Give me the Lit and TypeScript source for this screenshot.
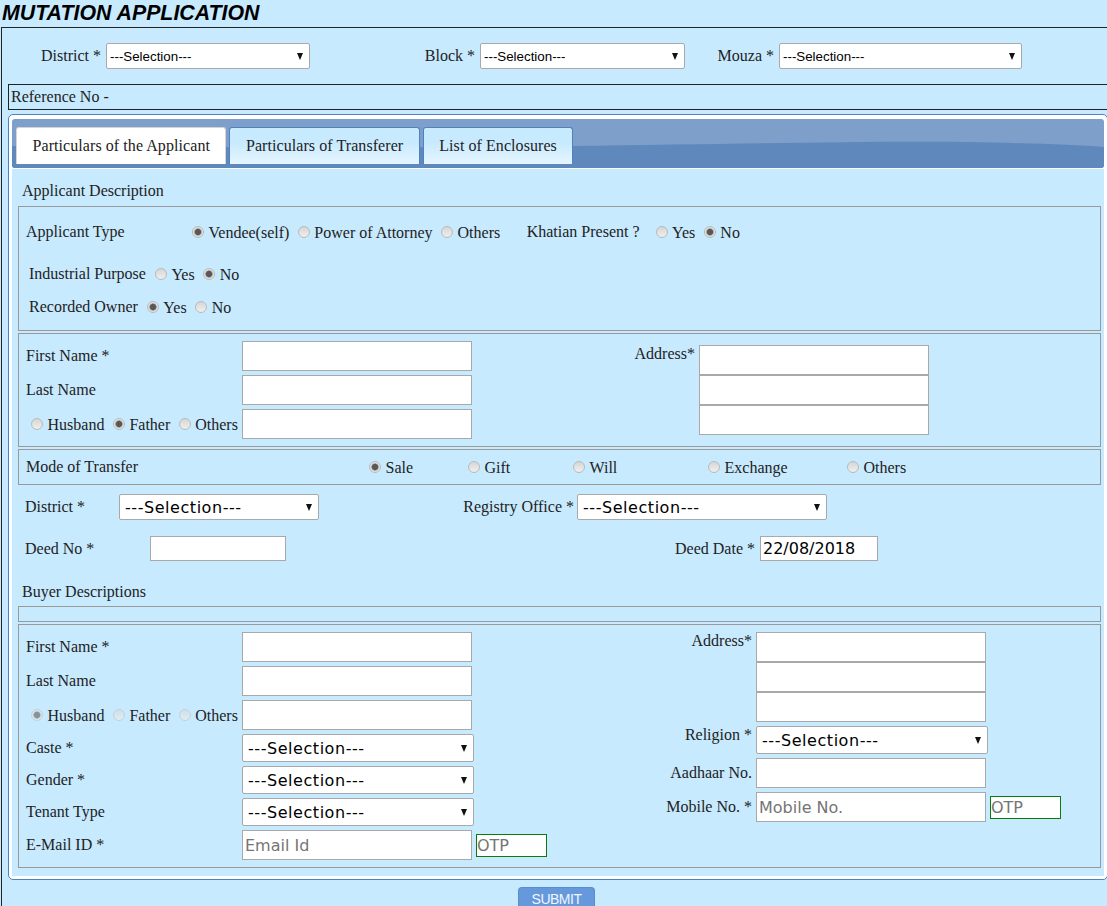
import { LitElement, html, css } from 'lit';
import { customElement } from 'lit/decorators.js';

const radio = (name: string, label: string, checked = false, disabled = false) => html`
  <label class="opt">
    <input type="radio" name=${name} ?checked=${checked} ?disabled=${disabled} />${label}
  </label>
`;

const select = (cls: string) => html`
  <select class=${cls}><option>---Selection---</option></select>
`;

@customElement('app-root')
export class AppRoot extends LitElement {
  static override styles = css`
    :host {
      display: block;
      width: 1107px;
      height: 906px;
      overflow: hidden;
      background: #c8eaff;
      color: #222;
      font-family: 'Liberation Serif', 'Times New Roman', serif;
      font-size: 16px;
      line-height: 18px;
    }

    * {
      box-sizing: border-box;
    }

    h1 {
      margin: 0;
      height: 27px;
      padding-left: 2px;
      font-family: 'Liberation Sans', Arial, sans-serif;
      font-size: 21.33px;
      font-style: italic;
      font-weight: bold;
      line-height: 27px;
      color: #000;
    }

    .outer {
      margin-left: 1px;
      width: 1200px;
      height: 879px;
      border: 1px solid #222;
      border-bottom: none;
    }

    .top-row {
      display: grid;
      grid-template-columns: 104px 204px 170px 205px 94px 243px;
      align-items: center;
      height: 56px;
    }

    .lbl-end {
      padding-right: 5px;
      text-align: right;
    }

    .ref {
      margin-left: 6px;
      height: 26px;
      padding-left: 2px;
      border: 1px solid #222;
      line-height: 24px;
    }

    .widget {
      display: flex;
      flex-direction: column;
      margin: 4px 0 0 6px;
      width: 1100px;
      height: 766px;
      padding: 4px 3px 3px;
      background: #fff;
      border: 1px solid #4f83bf;
      border-radius: 5px;
    }

    .tabbar {
      position: relative;
      display: flex;
      gap: 3px;
      flex: none;
      height: 49px;
      padding: 8px 0 0 4px;
      background: #7d9fc9;
      border-radius: 3px;
      overflow: hidden;
    }

    .wave {
      position: absolute;
      left: 0;
      top: 0;
      width: 1092px;
      height: 49px;
    }

    .tab {
      position: relative;
      height: 37px;
      padding: 0 15.5px;
      line-height: 36px;
      letter-spacing: 0.07px;
      background: linear-gradient(#c8eaff 40%, #e6f5ff);
      border: 1px solid #4f83bf;
      border-bottom: none;
      border-radius: 3px 3px 0 0;
    }

    .tab.active {
      background: #fff;
      border-color: #d5d5d5;
    }

    .panel {
      flex: 1;
      margin-top: 1px;
      padding-left: 6px;
      background: #c8eaff;
    }

    .heading {
      padding-left: 4px;
      display: flex;
      align-items: center;
    }

    .heading.first {
      height: 37px;
      padding-top: 7px;
    }

    .heading.second {
      height: 45px;
      padding-top: 16px;
    }

    .box {
      width: 1083px;
      border: 1px solid #999;
    }

    .box + .box {
      margin-top: 2px;
    }

    .type-box {
      height: 125px;
      padding-left: 7px;
    }

    .flex-row {
      display: flex;
      align-items: center;
    }

    .row-a {
      height: 50px;
    }

    .row-b {
      height: 34px;
      padding-left: 3px;
    }

    .row-c {
      height: 32px;
      padding-left: 3px;
    }

    .type-lbl {
      width: 166px;
    }

    .ind-lbl {
      margin-right: 9px;
    }

    .khatian {
      margin: 0 16px 0 18px;
    }

    .opt {
      display: inline-flex;
      align-items: center;
      margin-right: 8.5px;
      padding-top: 2px;
      white-space: nowrap;
    }

    input[type='radio'] {
      appearance: none;
      flex: none;
      width: 12px;
      height: 12px;
      margin: -3px 4.5px 0 0;
      border: 1px solid #bababa;
      border-radius: 50%;
      background: linear-gradient(#d6d6d6, #efefef);
    }

    input[type='radio']:checked {
      background: radial-gradient(circle, #585858 0 2.6px, #8a8a8a 3.3px, #e2e2e2 4px);
    }

    input[type='radio']:disabled {
      opacity: 0.6;
      border-color: #c0c0c0;
    }

    input[type='text'] {
      display: block;
      width: 230px;
      height: 30px;
      padding: 1px 2px;
      border: 1px solid #a9a9a9;
      background: #fff;
      font-family: 'DejaVu Sans', Verdana, sans-serif;
      font-size: 16px;
      color: #000;
      outline: none;
    }

    input::placeholder {
      color: #757575;
      opacity: 1;
    }

    input.otp {
      width: 71px;
      height: 23px;
      margin-left: 4px;
      padding: 0;
      border-color: #0a7a0a;
      align-self: center;
    }

    input.deed {
      height: 25px;
    }

    input.deed-no {
      width: 136px;
    }

    input.deed-date {
      width: 118px;
    }

    select {
      appearance: none;
      display: block;
      border: 1px solid #a9a9a9;
      border-radius: 2px;
      color: #000;
      background: #fff
        url("data:image/svg+xml,%3Csvg xmlns='http://www.w3.org/2000/svg' width='6' height='7'%3E%3Cpath d='M0 0h6L3 7z' fill='%23111'/%3E%3C/svg%3E")
        no-repeat right 6px center;
    }

    select.small {
      height: 26px;
      width: 100%;
      padding: 0 0 0 3px;
      font-family: 'Liberation Sans', Arial, sans-serif;
      font-size: 13.33px;
    }

    select.big {
      height: 26px;
      padding: 0 0 0 5px;
      font-family: 'DejaVu Sans', Verdana, sans-serif;
      font-size: 16px;
      letter-spacing: 0.55px;
    }

    select.wide {
      width: 232px;
      height: 28px;
    }

    .person {
      display: flex;
      align-items: flex-start;
      padding: 7px 0 0 7px;
    }

    .applicant {
      height: 114px;
    }

    .buyer {
      height: 244px;
    }

    .form-grid {
      display: grid;
      grid-template-columns: 216px 230px;
      row-gap: 4px;
      align-items: center;
    }

    .form-grid.with-otp {
      grid-template-columns: 216px 230px 75px;
    }

    .rel-opts {
      padding-left: 5px;
      white-space: nowrap;
      display: flex;
    }

    .rel-opts .opt:last-child {
      margin-right: 0;
    }

    .addr {
      display: flex;
      width: 457px;
      margin-top: 4px;
    }

    .addr-lbl {
      width: 227px;
      padding-right: 4px;
      text-align: right;
    }

    .right-grid {
      display: grid;
      grid-template-columns: 209px 230px 75px;
      row-gap: 4px;
      align-items: center;
    }

    .right-grid .lbl {
      text-align: right;
      padding-right: 4px;
    }

    .right-grid .top {
      align-self: start;
    }

    .stack {
      grid-column: 2;
    }

    .mode-box {
      display: grid;
      grid-template-columns: 343px 99px 105px 135px 139px auto;
      align-items: center;
      height: 36px;
      padding-left: 7px;
    }

    .deed-grid {
      display: grid;
      grid-template-columns: 94px 200px 258px 250px;
      align-items: center;
      padding-left: 7px;
    }

    .deed-grid > .office {
      padding-right: 3px;
      text-align: right;
    }

    .deed-row {
      margin-top: 9px;
      height: 26px;
    }

    .deed-row2 {
      display: flex;
      align-items: center;
      margin-top: 16px;
      height: 25px;
      padding-left: 7px;
    }

    .deed-no-lbl {
      width: 125px;
    }

    .deed-date-lbl {
      width: 474px;
      padding-right: 5px;
      text-align: right;
    }

    .blank {
      height: 16px;
    }

    .actions {
      margin: 7px 0 0 516px;
    }

    button {
      display: block;
      width: 77px;
      height: 19px;
      padding: 5px 0 0;
      background: #6699dc;
      border: 1px solid #5a8cc9;
      border-bottom: none;
      border-radius: 4px 4px 0 0;
      color: #f0f6ff;
      font-family: 'Liberation Sans', Arial, sans-serif;
      font-size: 14px;
      line-height: 13px;
      letter-spacing: -0.5px;
    }
  `;

  protected override render() {
    return html`
      <h1>MUTATION APPLICATION</h1>
      <div class="outer">
        <div class="top-row">
          <span class="lbl-end">District *</span>${select('small')}
          <span class="lbl-end">Block *</span>${select('small')}
          <span class="lbl-end">Mouza *</span>${select('small')}
        </div>
        <div class="ref">Reference No -</div>
        <div class="widget">
          <div class="tabbar">
            <svg class="wave" viewBox="0 0 1092 49" preserveAspectRatio="none">
              <path d="M0 27C250 29 400 28 560 27C720 25 850 22 950 23C1020 24 1060 26 1092 28V49H0Z" fill="#5f88bc" />
            </svg>
            <div class="tab active">Particulars of the Applicant</div>
            <div class="tab">Particulars of Transferer</div>
            <div class="tab">List of Enclosures</div>
          </div>
          <div class="panel">
            <div class="heading first">Applicant Description</div>
            <div class="box type-box">
              <div class="flex-row row-a">
                <span class="type-lbl">Applicant Type</span>
                ${radio('type', 'Vendee(self)', true)}
                ${radio('type', 'Power of Attorney')}
                ${radio('type', 'Others')}
                <span class="khatian">Khatian Present ?</span>
                ${radio('khatian', 'Yes')}
                ${radio('khatian', 'No', true)}
              </div>
              <div class="flex-row row-b">
                <span class="ind-lbl">Industrial Purpose</span>
                ${radio('ind', 'Yes')}
                ${radio('ind', 'No', true)}
              </div>
              <div class="flex-row row-c">
                <span class="ind-lbl">Recorded Owner</span>
                ${radio('rec', 'Yes', true)}
                ${radio('rec', 'No')}
              </div>
            </div>
            <div class="box person applicant">
              <div class="form-grid">
                <span>First Name *</span><input type="text" />
                <span>Last Name</span><input type="text" />
                <span class="rel-opts">
                  ${radio('rel', 'Husband')}
                  ${radio('rel', 'Father', true)}
                  ${radio('rel', 'Others')}
                </span>
                <input type="text" />
              </div>
              <div class="addr">
                <span class="addr-lbl">Address*</span>
                <div>
                  <input type="text" />
                  <input type="text" />
                  <input type="text" />
                </div>
              </div>
            </div>
            <div class="box mode-box">
              <span>Mode of Transfer</span>
              ${radio('mode', 'Sale', true)}
              ${radio('mode', 'Gift')}
              ${radio('mode', 'Will')}
              ${radio('mode', 'Exchange')}
              ${radio('mode', 'Others')}
            </div>
            <div class="deed-grid deed-row">
              <span>District *</span>
              ${select('big')}
              <span class="office">Registry Office *</span>
              ${select('big')}
            </div>
            <div class="deed-row2">
              <span class="deed-no-lbl">Deed No *</span>
              <input class="deed deed-no" type="text" />
              <span class="deed-date-lbl">Deed Date *</span>
              <input class="deed deed-date" type="text" .value=${'22/08/2018'} />
            </div>
            <div class="heading second">Buyer Descriptions</div>
            <div class="box blank"></div>
            <div class="box person buyer">
              <div class="form-grid with-otp">
                <span>First Name *</span><input type="text" /><span></span>
                <span>Last Name</span><input type="text" /><span></span>
                <span class="rel-opts">
                  ${radio('brel', 'Husband', true, true)}
                  ${radio('brel', 'Father', false, true)}
                  ${radio('brel', 'Others', false, true)}
                </span>
                <input type="text" /><span></span>
                <span>Caste *</span>${select('big wide')}<span></span>
                <span>Gender *</span>${select('big wide')}<span></span>
                <span>Tenant Type</span>${select('big wide')}<span></span>
                <span>E-Mail ID *</span>
                <input type="text" placeholder="Email Id" />
                <input class="otp" type="text" placeholder="OTP" />
              </div>
              <div class="right-grid">
                <span class="lbl top">Address*</span>
                <div class="stack">
                  <input type="text" />
                  <input type="text" />
                  <input type="text" />
                </div>
                <span></span>
                <span class="lbl top">Religion *</span>${select('big wide')}<span></span>
                <span class="lbl">Aadhaar No.</span><input type="text" /><span></span>
                <span class="lbl">Mobile No. *</span>
                <input type="text" placeholder="Mobile No." />
                <input class="otp" type="text" placeholder="OTP" />
              </div>
            </div>
          </div>
        </div>
        <div class="actions"><button>SUBMIT</button></div>
      </div>
    `;
  }
}

declare global {
  interface HTMLElementTagNameMap {
    'app-root': AppRoot;
  }
}
